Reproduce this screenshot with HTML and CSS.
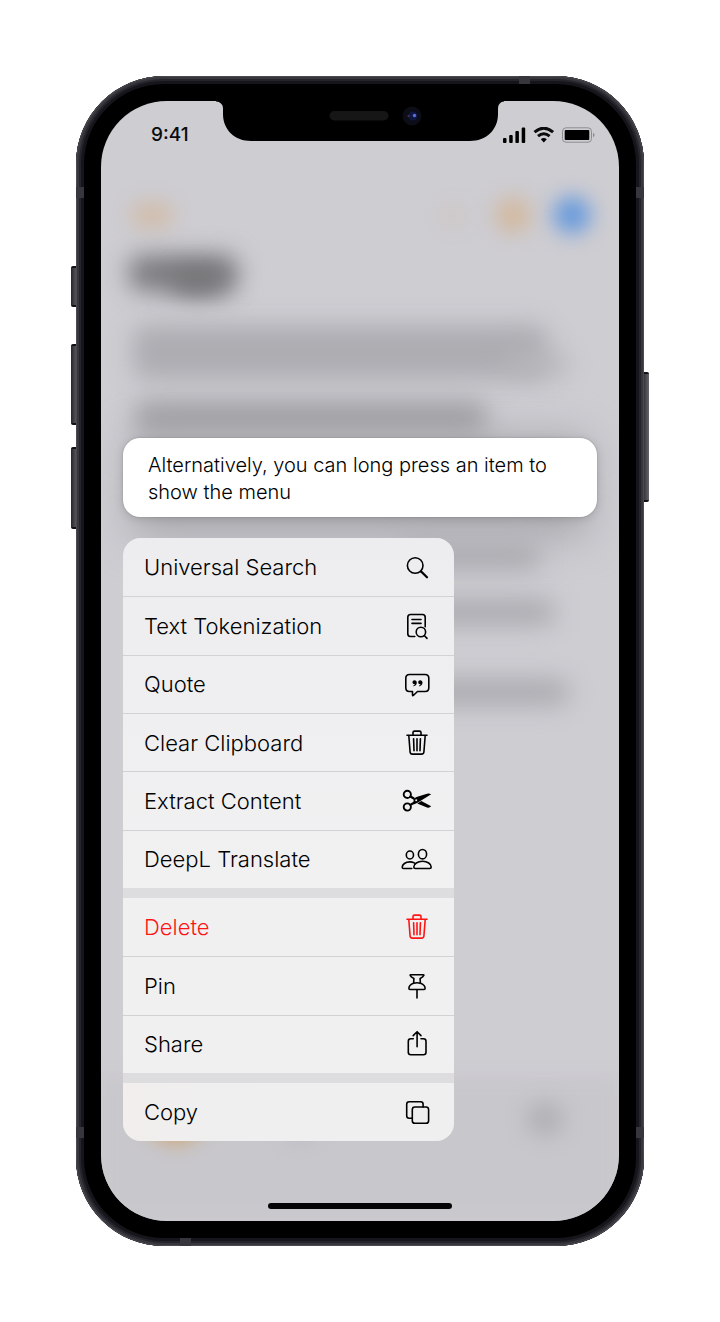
FILE: index.html
```html
<!DOCTYPE html>
<html lang="en">
<head>
<meta charset="utf-8">
<meta name="viewport" content="width=device-width, initial-scale=1">
<title>Clips</title>
<link rel="stylesheet" href="styles.css">
</head>
<body>
<svg class="sprite" aria-hidden="true">
  <symbol id="trash" viewBox="0 0 32 32">
    <path d="M6 8.3h20M12 8V5.6q0-1.5 1.5-1.5h5q1.5 0 1.500 1.500V8M7.800 8.500l1.300 16.500q.2 2.100 2.200 2.100h9.400q2 0 2.200-2.100l1.300-16.500M12.600 11.800l.4 12M16 11.800v12M19.400 11.800l-.4 12"/>
  </symbol>
</svg>
<main class="phone">
  <span class="key key-mute"></span>
  <span class="key key-up"></span>
  <span class="key key-down"></span>
  <span class="key key-power"></span>
  <span class="band band-tl"></span><span class="band band-tr"></span>
  <span class="band band-bl"></span><span class="band band-br"></span>
  <span class="band band-top"></span><span class="band band-bottom"></span>
  <div class="screen">
    <div class="backdrop" aria-hidden="true">
      <i class="blob blob-edit"></i><i class="blob blob-faint"></i><i class="blob blob-orange"></i><i class="blob blob-blue"></i>
      <i class="smudge title"></i><i class="smudge title-tail"></i>
      <i class="smudge para"></i><i class="smudge para-end"></i><i class="smudge line"></i>
      <i class="smudge shade"></i>
      <i class="smudge side side-a"></i><i class="smudge side side-b"></i><i class="smudge side side-c"></i>
      <i class="toolbar"></i>
      <i class="blob blob-tab"></i><i class="blob blob-tab-two"></i><i class="blob blob-tab-last"></i>
    </div>
    <svg class="notch" viewBox="0 0 288 42" aria-hidden="true">
      <path d="M0 0H288V1.500Q282.500 2 282 8V14C282 30 270 41 254 41H35C19 41 7 30 7 14V8Q6.500 2 0 1.500Z"/>
      <rect class="speaker" x="113.500" y="11" width="59" height="9.500" rx="4.700"/>
      <circle class="lens" cx="196" cy="16" r="9.500"/>
      <circle class="lens-ring" cx="197" cy="16" r="4.500"/>
      <circle class="glint" cx="198.500" cy="15.500" r="1.700"/>
      <circle class="glint-dim" cx="192.500" cy="16" r="1"/>
    </svg>
    <header class="status">
      <time class="clock">9:41</time>
      <svg class="signals" viewBox="0 0 92 16" aria-label="Signal, Wi-Fi, battery">
        <path d="M0 12q0-1 1-1h1.500q1 0 1 1v3q0 1-1 1H1q-1 0-1-1zM6.200 9q0-1 1-1h1.500q1 0 1 1v6q0 1-1 1H7.200q-1 0-1-1zM12.400 5q0-1 1-1h1.500q1 0 1 1v10q0 1-1 1h-1.500q-1 0-1-1zM18.700 1.500q0-1 1-1h1.500q1 0 1 1V15q0 1-1 1h-1.500q-1 0-1-1z"/>
        <path class="wave" d="M31.500 5.200q9.300-8 18.600 0M35 9.200q5.800-4.800 11.600 0"/>
        <path d="M37.800 12.300q3-2.400 6 0l-3 3.200z"/>
        <rect class="shell" x="59.500" y=".8" width="29" height="14.400" rx="3.500"/>
        <rect x="61.700" y="3" width="24.600" height="10" rx="1"/>
        <path class="cap" d="M90 5.700q1.600.8 1.600 2.300T90 10.300z"/>
      </svg>
    </header>
    <section class="stage">
      <p class="card">Alternatively, you can long press an item to show the menu</p>
      <div class="menu" role="menu">
        <div class="group group-tools">
          <button class="item" role="menuitem">Universal Search
            <svg class="icon" viewBox="0 0 32 32"><circle cx="14.200" cy="14.500" r="7.800"/><path class="bold" d="M20 20.400l6 5.900"/></svg></button>
          <button class="item" role="menuitem">Text Tokenization
            <svg class="icon" viewBox="0 0 32 32"><path d="M13.800 26.500H9.500q-2.700 0-2.700-2.700V7.200q0-2.700 2.700-2.700h12q2.700 0 2.700 2.700v9.500M11 9.500h9M11 13.400h9"/><circle cx="19.900" cy="22" r="4.700"/><path d="M23.300 25.500l2.700 2.900"/></svg></button>
          <button class="item" role="menuitem">Quote
            <svg class="icon" viewBox="0 0 32 32"><path d="M8.500 6.500h15.600q3.700 0 3.700 3.700v9.600q0 3.700-3.700 3.700h-7.600l-4.200 4q-.8.700-.8-.4v-3.600h-3q-3.700 0-3.700-3.700v-9.600q0-3.700 3.700-3.700z"/><path class="solid" d="M13.500 12.200c1.500 0 2.300 1.200 2.300 2.600 0 1.800-1.300 3.100-3 3.500-.6.100-.8-.5-.3-.8.700-.3 1.200-.7 1.500-1.300-1.300.3-2.500-.5-2.500-1.900 0-1.200.8-2.100 2-2.100zM19.200 12.200c1.500 0 2.300 1.200 2.300 2.600 0 1.800-1.300 3.100-3 3.500-.6.100-.8-.5-.3-.8.700-.3 1.200-.7 1.500-1.300-1.300.3-2.500-.5-2.500-1.900 0-1.200.8-2.100 2-2.100z"/></svg></button>
          <button class="item" role="menuitem">Clear Clipboard
            <svg class="icon"><use href="#trash"/></svg></button>
          <button class="item" role="menuitem">Extract Content
            <svg class="icon" viewBox="0 0 32 32"><circle class="medium" cx="6.300" cy="9.400" r="3.600"/><circle class="medium" cx="6.300" cy="22" r="3.600"/><path class="bold" d="M9.500 11.500l3.300 2M9.500 19.900l5-3.200"/><path class="solid" d="M12.600 15.300q.5-2.600 2.900-3.400L26 8.700q2.300-.6 4.200.5L16.500 17.700l-3.900 1.900zM16.200 18.400l4.100-2.400 9.900 5.300q-1.900 1.900-4.200 1.100z"/><circle class="pin-hole" cx="15.200" cy="15.300" r="1"/></svg></button>
          <button class="item" role="menuitem">DeepL Translate
            <svg class="icon" viewBox="0 0 32 32"><ellipse cx="8.900" cy="12" rx="3.600" ry="4"/><ellipse cx="21.500" cy="11.200" rx="4.100" ry="4.700"/><path d="M10.800 25.500H2.500q-1.300 0-1.300-1.300c0-2.800 3.300-5.300 7.700-5.300 1.700 0 3.200.4 4.400 1M14.300 25.500q-1.500 0-1.500-1.500c0-3 3.700-5.700 8.700-5.700s8.700 2.700 8.700 5.700q0 1.500-1.500 1.500z"/></svg></button>
        </div>
        <div class="group group-actions">
          <button class="item danger" role="menuitem">Delete
            <svg class="icon"><use href="#trash"/></svg></button>
          <button class="item" role="menuitem">Pin
            <svg class="icon" viewBox="0 0 32 32"><path d="M9.700 4.700h12.600q.8 0 .5.800-.7 1.600-3.700 3l.3 4.700c3 1 4.700 3.100 4.700 5.300q0 1-1 1H8.900q-1 0-1-1c0-2.200 1.700-4.300 4.700-5.300l.3-4.700c-3-1.400-3.700-3-3.700-3q-.3-.8.500-.8zM12.700 13.200q3.300-1 6.600 0M16 19.600V28"/></svg></button>
          <button class="item" role="menuitem">Share
            <svg class="icon" viewBox="0 0 32 32"><path d="M12.300 10.700H9.800q-2.500 0-2.500 2.500v11q0 2.500 2.500 2.500h12.700q2.500 0 2.500-2.500v-11q0-2.500-2.500-2.500H20M16.100 18.700V4M12.200 7.600l3.900-3.900L20 7.600"/></svg></button>
        </div>
        <div class="group group-copy">
          <button class="item" role="menuitem">Copy
            <svg class="icon" viewBox="0 0 32 32"><path d="M11 22.200H8.200q-2.500 0-2.500-2.500V8.300q0-2.500 2.500-2.500h11.400q2.500 0 2.500 2.500V11"/><rect x="11.300" y="11" width="16.300" height="16.300" rx="2.600"/></svg></button>
        </div>
      </div>
    </section>
    <div class="home"></div>
  </div>
</main>
</body>
</html>
```

FILE: styles.css
```css
* { box-sizing: border-box; }

body {
  margin: 0;
  padding: 76px;
  background: #fff;
  color: #0b0b0c;
  font-family: Inter, "Liberation Sans", sans-serif;
}

.sprite { position: absolute; width: 0; height: 0; }

.phone {
  position: relative;
  max-width: 568px;
  margin: 0 auto;
  padding: 25px;
  border-radius: 88px;
  background: #000;
  box-shadow:
    inset 0 0 0 1px #4a4a50,
    inset 0 0 0 3px #36363c,
    inset 0 0 0 5px #24242a,
    inset 0 0 0 8px #15151b;
}

/* Hardware keys and antenna bands sit on the rim */
.key {
  position: absolute;
  left: -5px;
  width: 5px;
  border-block: 2px solid #111116;
  border-radius: 2px 0 0 2px;
  background: linear-gradient(90deg, #25252c, #55555c);
}
.key-mute { top: 190px; height: 41px; }
.key-up { top: 268px; height: 81px; }
.key-down { top: 371px; height: 82px; }
.key-power {
  top: 296px;
  right: -5px;
  left: auto;
  height: 130px;
  border-radius: 0 2px 2px 0;
  background: linear-gradient(90deg, #36363d, #66666b);
}
.band { position: absolute; width: 8px; height: 11px; background: #36363c; }
.band-tl { top: 111px; left: 0; }
.band-tr { top: 111px; right: 0; }
.band-bl { bottom: 108px; left: 0; }
.band-br { bottom: 108px; right: 0; }
.band-top { top: 0; right: 114px; width: 11px; height: 8px; }
.band-bottom { bottom: 0; left: 104px; width: 11px; height: 8px; }

.screen {
  position: relative;
  display: flex;
  flex-direction: column;
  border-radius: 66px;
  overflow: hidden;
  background: #cecdd2;
  isolation: isolate;
}

/* Out-of-focus app behind the menu */
.backdrop { position: absolute; inset: 0; z-index: -1; }
.backdrop i { position: absolute; }
.blob { border-radius: 50%; filter: blur(10px); }
.blob-edit { top: 101px; left: 29px; width: 44px; height: 26px; background: #d1bca8; }
.blob-faint { top: 106px; right: 156px; width: 20px; height: 18px; background: #d0c4ba; }
.blob-orange { top: 96px; right: 88px; width: 36px; height: 36px; background: #d2b9a0; }
.blob-blue { top: 95px; right: 28px; width: 38px; height: 38px; background: #6a9bdc; }
.smudge { border-radius: 12px; filter: blur(12px); }
.smudge.title { top: 154px; left: 28px; width: 108px; height: 36px; background: #7c7c7f; }
.smudge.title-tail { top: 168px; left: 66px; width: 62px; height: 26px; border-radius: 50%; background: #727275; }
.smudge.para { top: 224px; left: 32px; right: 72px; height: 54px; background: #acacb1; }
.smudge.para-end { top: 252px; right: 50px; width: 64px; height: 22px; background: #b7b7bb; }
.smudge.line { top: 300px; left: 34px; right: 132px; height: 36px; background: #a0a0a4; }
.smudge.shade { top: 336px; left: 30px; right: 30px; height: 100px; background: #a9a9ae; filter: blur(20px); }
.smudge.side { left: 300px; height: 26px; background: #aaaaaf; }
.side-a { top: 442px; right: 78px; }
.side-b { top: 498px; right: 64px; }
.side-c { top: 578px; right: 50px; }
.toolbar { inset: auto 0 0; height: 144px; background: #c8c7cc; filter: blur(8px); }
.blob-tab { bottom: 78px; left: 48px; width: 54px; height: 44px; background: #cda574; }
.blob-tab-two { bottom: 80px; left: 182px; width: 34px; height: 40px; background: #b9b9bd; }
.blob-tab-last { right: 54px; bottom: 84px; width: 40px; height: 36px; background: #b3b3b7; }

.notch {
  position: absolute;
  top: -1px;
  left: 50%;
  width: 288px;
  height: 42px;
  margin-left: -144px;
}
.speaker { fill: #161617; }
.lens { fill: #0c0d16; }
.lens-ring { fill: #101842; }
.glint { fill: #5d6fd8; }
.glint-dim { fill: #4a3560; }

.status {
  display: flex;
  justify-content: space-between;
  align-items: center;
  height: 68px;
  padding: 0 24px 0 50px;
}
.clock { font-size: 19px; font-weight: 500; line-height: 24px; }
.signals { width: 92px; height: 16px; }
.wave { fill: none; stroke: #0b0b0c; stroke-width: 3; }
.shell { fill: none; stroke: #8d8d91; stroke-width: 1; }
.cap { fill: #8d8d91; }

.stage {
  display: flex;
  flex-direction: column;
  align-items: flex-start;
  gap: 21px;
  padding: 269px 22px 62px;
}
.card {
  width: 100%;
  margin: 0;
  padding: 14px 25px 11px;
  border-radius: 17px;
  background: #fff;
  box-shadow: 0 0 2px #0003, 0 2px 10px #0002;
  color: #000;
  font-size: 20px;
  font-weight: 300;
  line-height: 27px;
}
.menu {
  display: grid;
  gap: 10px;
  width: 100%;
  max-width: 331px;
  border-radius: 18px;
  overflow: hidden;
  background: #dddddf;
}
.group { display: grid; grid-auto-rows: 1fr; background: #f0f0f1; }
.group-tools { min-height: 350px; background: linear-gradient(#ededef, #f1f1f2); }
.group-actions { min-height: 175px; }
.group-copy { min-height: 58px; background: linear-gradient(90deg, #f1eeed, #efeff0 40%); }
.item {
  display: flex;
  justify-content: space-between;
  align-items: center;
  padding: 0 21px;
  border: 0;
  background: none;
  color: #000;
  font: 300 22px/30px Inter, "Liberation Sans", sans-serif;
  text-align: left;
}
.item + .item { border-top: 1px solid #d2d2d5; }
.item.danger { color: #ff1414; }
.icon {
  flex: none;
  width: 32px;
  height: 32px;
  fill: none;
  stroke: currentColor;
  stroke-width: 1.6;
  stroke-linecap: round;
  stroke-linejoin: round;
}
.medium { stroke-width: 1.9; }
.bold { stroke-width: 2.2; }
.solid { fill: currentColor; stroke: none; }
.pin-hole { fill: #f0f0f1; stroke: none; }

.home {
  align-self: center;
  width: 184px;
  height: 6px;
  margin-bottom: 12px;
  border-radius: 3px;
  background: #050505;
}
```
